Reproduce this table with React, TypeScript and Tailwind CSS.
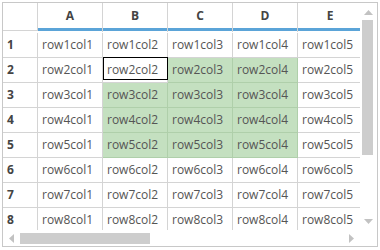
import React from "react";

const cols = ["A", "B", "C", "D", "E"];
const rows = [1, 2, 3, 4, 5, 6, 7, 8];

function isGreen(r: number, c: number) {
  if (r === 2 && c === 2) return false;
  return r >= 2 && r <= 5 && c >= 2 && c <= 4;
}

export default function App() {
  return (
    <div className="w-[380px] h-[250px] bg-white p-[2px]" style={{ fontFamily: '"Open Sans", "Noto Sans", sans-serif' }}>
      <div className="w-[376px] h-[245px] border border-[#c8c8c8] flex flex-col overflow-hidden">
        <div className="flex h-[227px]">
          <div className="w-[357px] overflow-hidden">
            <div className="w-[400px]">
              {/* header */}
              <div className="flex h-[29px]">
                <div className="w-[35px] shrink-0 border-r border-b border-[#d4d4d4] h-[28px]" />
                {cols.map((c) => (
                  <div
                    key={c}
                    className="w-[65px] shrink-0 h-[29px] border-r border-[#d4d4d4] flex flex-col"
                  >
                    <div className="h-[25px] flex items-center justify-center text-[12px] font-bold text-[#444]">{c}</div>
                    <div className="h-[3px] bg-[#5ba4d8]" />
                  </div>
                ))}
              </div>
              <div className="pt-px">
                {rows.map((r) => (
                  <div key={r} className="flex h-[25px]">
                    <div className="w-[35px] shrink-0 border-r border-b border-[#d4d4d4] flex items-center pl-[4px] text-[12px] font-bold text-[#444]">
                      {r}
                    </div>
                    {cols.map((c, i) => {
                      const ci = i + 1;
                      const green = isGreen(r, ci);
                      const active = r === 2 && ci === 2;
                      return (
                        <div
                          key={c}
                          className={
                            "relative w-[65px] shrink-0 border-r border-b flex items-center pl-[4px] text-[12px] text-[#555] " +
                            (green ? "bg-[#c4e0c0] border-[#afcfaa]" : "bg-white border-[#d4d4d4]")
                          }
                        >
                          {`row${r}col${ci}`}
                          {active && (
                            <div className="absolute -top-px left-0 -right-px bottom-[2px] border border-black" />
                          )}
                        </div>
                      );
                    })}
                  </div>
                ))}
              </div>
            </div>
          </div>
          {/* vertical scrollbar */}
          <div className="w-[17px] shrink-0 flex flex-col items-center bg-white">
            <div className="h-[17px] w-full flex items-center justify-center pt-[2px]">
              <svg width="9" height="5" viewBox="0 0 9 5"><path d="M4.5 0 L9 5 L0 5 Z" fill="#c2c2c2" /></svg>
            </div>
            <div className="w-full flex justify-start pl-[2px]">
              <div className="w-[11px] h-[135px] bg-[#cdcdcd]" />
            </div>
            <div className="flex-1" />
            <div className="h-[17px] w-full flex items-center justify-center pb-[1px]">
              <svg width="9" height="5" viewBox="0 0 9 5"><path d="M0 0 L9 0 L4.5 5 Z" fill="#c2c2c2" /></svg>
            </div>
          </div>
        </div>
        {/* horizontal scrollbar */}
        <div className="flex h-[16px]">
          <div className="w-[357px] flex items-center">
            <div className="w-[17px] h-full flex items-center justify-center">
              <svg width="5" height="9" viewBox="0 0 5 9"><path d="M5 0 L5 9 L0 4.5 Z" fill="#c2c2c2" /></svg>
            </div>
            <div className="w-[130px] h-[11px] bg-[#cdcdcd]" />
            <div className="flex-1" />
            <div className="w-[17px] h-full flex items-center justify-center">
              <svg width="5" height="9" viewBox="0 0 5 9"><path d="M0 0 L5 4.5 L0 9 Z" fill="#c2c2c2" /></svg>
            </div>
          </div>
          <div className="w-[17px]" />
        </div>
      </div>
    </div>
  );
}
